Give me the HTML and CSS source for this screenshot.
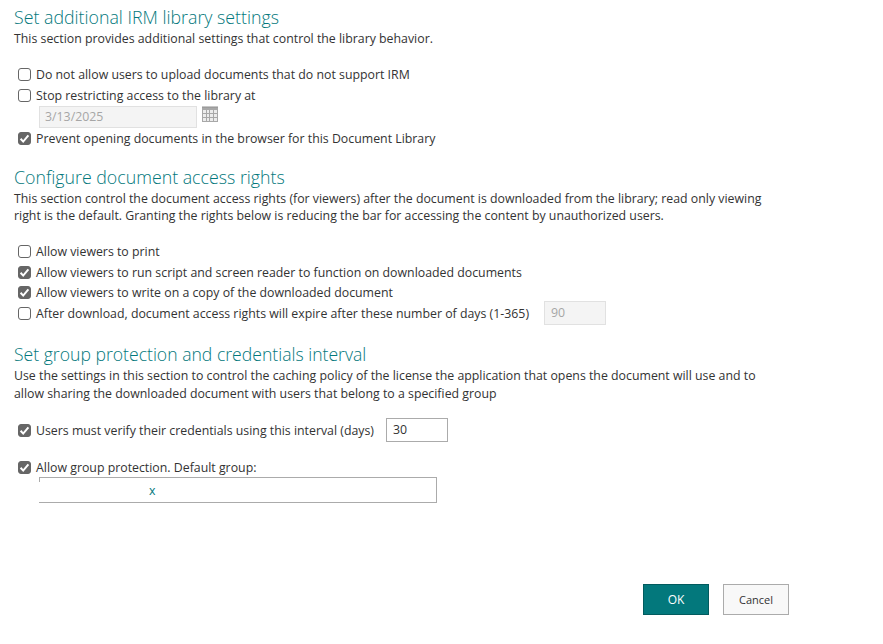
FILE: index.html
```html
<!DOCTYPE html>
<html lang="en">
<head>
<meta charset="utf-8">
<title>IRM library settings</title>
<link rel="stylesheet" href="styles.css">
</head>
<body>
<main class="page">
  <section class="section first">
    <h2 class="title">Set additional IRM library settings</h2>
    <p class="desc">This section provides additional settings that control the library behavior.</p>
    <div class="options">
      <div class="row"><span class="box"></span><span>Do not allow users to upload documents that do not support IRM</span></div>
      <div class="row"><span class="box"></span><span>Stop restricting access to the library at</span></div>
      <div class="date-row">
        <div class="field date">3/13/2025</div>
        <svg class="cal" width="16" height="16" viewBox="0 0 16 16" aria-hidden="true">
          <rect x="0" y="1" width="16" height="15" fill="#a8a8a8"/>
          <path d="M1 0v2M3 0v2M5 0v2M7 0v2M9 0v2M11 0v2M13 0v2M15 0v2" stroke="#8f8f8f" stroke-width="1"/>
          <path d="M1 4h3v3H1zM5 4h2v3H5zM8 4h3v3H8zM12 4h3v3h-3zM1 8h3v3H1zM5 8h2v3H5zM8 8h3v3H8zM12 8h3v3h-3zM1 12h3v3H1zM5 12h2v3H5zM8 12h3v3H8zM12 12h3v3h-3z" fill="#ececec"/>
        </svg>
      </div>
      <div class="row"><span class="box checked"><svg viewBox="0 0 13 13" aria-hidden="true"><path d="M2.6 6.8 5.2 9.6 10.4 3.4" fill="none" stroke="#fff" stroke-width="2"/></svg></span><span>Prevent opening documents in the browser for this Document Library</span></div>
    </div>
  </section>

  <section class="section second">
    <h2 class="title">Configure document access rights</h2>
    <p class="desc">This section control the document access rights (for viewers) after the document is downloaded from the library; read only viewing<br>right is the default. Granting the rights below is reducing the bar for accessing the content by unauthorized users.</p>
    <div class="options">
      <div class="row"><span class="box"></span><span>Allow viewers to print</span></div>
      <div class="row"><span class="box checked"><svg viewBox="0 0 13 13" aria-hidden="true"><path d="M2.6 6.8 5.2 9.6 10.4 3.4" fill="none" stroke="#fff" stroke-width="2"/></svg></span><span>Allow viewers to run script and screen reader to function on downloaded documents</span></div>
      <div class="row"><span class="box checked"><svg viewBox="0 0 13 13" aria-hidden="true"><path d="M2.6 6.8 5.2 9.6 10.4 3.4" fill="none" stroke="#fff" stroke-width="2"/></svg></span><span>Allow viewers to write on a copy of the downloaded document</span></div>
      <div class="row"><span class="box"></span><span>After download, document access rights will expire after these number of days (1-365)</span><div class="field days">90</div></div>
    </div>
  </section>

  <section class="section third">
    <h2 class="title">Set group protection and credentials interval</h2>
    <p class="desc">Use the settings in this section to control the caching policy of the license the application that opens the document will use and to<br>allow sharing the downloaded document with users that belong to a specified group</p>
    <div class="options">
      <div class="row interval"><span class="box checked"><svg viewBox="0 0 13 13" aria-hidden="true"><path d="M2.6 6.8 5.2 9.6 10.4 3.4" fill="none" stroke="#fff" stroke-width="2"/></svg></span><span>Users must verify their credentials using this interval (days)</span><div class="field credential">30</div></div>
      <div class="row group"><span class="box checked"><svg viewBox="0 0 13 13" aria-hidden="true"><path d="M2.6 6.8 5.2 9.6 10.4 3.4" fill="none" stroke="#fff" stroke-width="2"/></svg></span><span>Allow group protection. Default group:</span></div>
      <div class="picker"><span class="picker-x">x</span></div>
    </div>
  </section>

  <div class="actions">
    <button class="btn primary" type="button">OK</button>
    <button class="btn" type="button">Cancel</button>
  </div>
</main>
</body>
</html>
```
FILE: styles.css
```css
* { box-sizing: border-box; }
html, body { margin: 0; padding: 0; background: #fff; }
body {
  width: 883px;
  height: 644px;
  overflow: hidden;
  font-family: "Open Sans", "Noto Sans", sans-serif;
  font-size: 12.33px;
  color: #333;
}
.page { padding: 5px 0 0 14px; display: flex; flex-direction: column; }
.title {
  margin: 0 0 1px;
  font-size: 17.77px;
  font-weight: 300;
  line-height: 24px;
  color: #03787c;
}
.third .title { font-size: 17.6px; }
.desc { margin: 0; line-height: 17.5px; color: #333; }
.section.second { margin-top: 16px; }
.section.third { margin-top: 18.5px; }
.options { display: flex; flex-direction: column; padding-left: 4px; margin-top: 16px; }
.second .options { margin-top: 16.5px; }
.row { display: flex; align-items: center; height: 21px; white-space: nowrap; }
.second .row { height: 20.7px; }
.box {
  flex: none;
  width: 13px;
  height: 13px;
  margin-right: 5px;
  border: 1px solid #666;
  border-radius: 3px;
  background: #fff;
}
.box.checked { background: #666; border-color: #666; position: relative; }
.box.checked svg { position: absolute; left: -1px; top: -1px; width: 13px; height: 13px; display: block; }
.date-row { display: flex; align-items: flex-start; margin: 0 0 0 21px; height: 22px; }
.field {
  flex: none;
  border: 1px solid #ababab;
  height: 24px;
  line-height: 22px;
  padding-left: 6px;
  color: #333;
}
.field.date {
  width: 158px;
  height: 22px;
  line-height: 20px;
  padding-left: 5px;
  background: #f4f4f4;
  border-color: #e1e1e1;
  color: #a6a6a6;
}
.cal { margin: 0 0 0 5px; display: block; }
.field.days {
  width: 62px;
  margin-left: 15px;
  background: #f4f4f4;
  border-color: #e1e1e1;
  color: #a6a6a6;
}
.field.credential { width: 62px; margin-left: 12px; }
.row.interval { height: 24px; }
.row.group { margin-top: 15px; height: 20px; }
.picker {
  margin: 0 0 0 21px;
  width: 398px;
  height: 26px;
  border: 1px solid #ababab;
  border-left: 0;
  position: relative;
  display: flex;
  align-items: center;
  padding-left: 110px;
}
.picker::before {
  content: "";
  position: absolute;
  left: 0;
  top: 0;
  width: 1px;
  height: 4px;
  background: #ababab;
}
.picker-x { color: #03787c; }
.actions {
  position: absolute;
  left: 643px;
  top: 584px;
  display: flex;
  gap: 14px;
}
.btn {
  width: 66px;
  height: 31px;
  padding: 0;
  border: 1px solid #ababab;
  background: #f8f8f8;
  font: 11px "Open Sans", "Noto Sans", sans-serif;
  color: #333;
}
.btn.primary { background: #03787c; border-color: #025b5e; color: #fff; font-size: 12px; }
```
